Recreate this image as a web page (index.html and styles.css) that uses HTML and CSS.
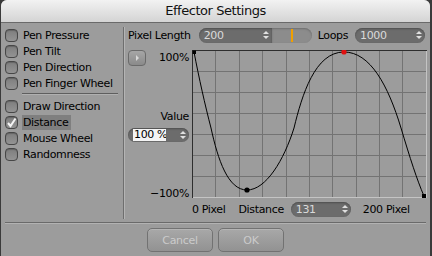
FILE: index.html
```html
<html>
  <head>
    <link rel="stylesheet" href="styles.css">
    <title>Effector Settings</title>
  </head>
  <body>
    <div class="window">
      <div class="titlebar">Effector Settings</div>

      <div class="main">
        <div class="options">
          <div class="option"><span class="box"></span><span class="label">Pen Pressure</span></div>
          <div class="option"><span class="box"></span><span class="label">Pen Tilt</span></div>
          <div class="option"><span class="box"></span><span class="label">Pen Direction</span></div>
          <div class="option"><span class="box"></span><span class="label">Pen Finger Wheel</span></div>
          <div class="rule"></div>
          <div class="option"><span class="box"></span><span class="label">Draw Direction</span></div>
          <div class="option">
            <span class="box">
              <svg width="13" height="13" viewBox="0 0 13 13"><path d="M3 7 L5.5 10 L10.5 2.5" fill="none" stroke="#f4f4f4" stroke-width="2"/></svg>
            </span>
            <span class="label active">Distance</span>
          </div>
          <div class="option"><span class="box"></span><span class="label">Mouse Wheel</span></div>
          <div class="option"><span class="box"></span><span class="label">Randomness</span></div>
        </div>

        <div class="panel">
          <div class="toprow">
            <span class="text">Pixel Length</span>
            <div class="field length">200<span class="spin"></span></div>
            <div class="slider"><span class="knob"></span></div>
            <span class="text loops">Loops</span>
            <div class="field count">1000<span class="spin"></span></div>
          </div>

          <div class="middle">
            <div class="axis">
              <div class="axis-top">
                <span class="play"></span>
                <span class="text">100%</span>
              </div>
              <div class="text value">Value</div>
              <div class="field pct"><span class="sel">100 %</span><span class="spin"></span></div>
              <div class="text minus">&minus;100%</div>
            </div>
            <svg class="graph" width="235" height="148" viewBox="0 0 235 148">
              <g stroke="#737373" stroke-width="1">
                <line x1="23.5" y1="0" x2="23.5" y2="147"/>
                <line x1="47.5" y1="0" x2="47.5" y2="147"/>
                <line x1="70.5" y1="0" x2="70.5" y2="147"/>
                <line x1="94.5" y1="0" x2="94.5" y2="147"/>
                <line x1="117.5" y1="0" x2="117.5" y2="147"/>
                <line x1="140.5" y1="0" x2="140.5" y2="147"/>
                <line x1="164.5" y1="0" x2="164.5" y2="147"/>
                <line x1="187.5" y1="0" x2="187.5" y2="147"/>
                <line x1="210.5" y1="0" x2="210.5" y2="147"/>
                <line x1="0" y1="21.5" x2="234" y2="21.5"/>
                <line x1="0" y1="42.5" x2="234" y2="42.5"/>
                <line x1="0" y1="63.5" x2="234" y2="63.5"/>
                <line x1="0" y1="84.5" x2="234" y2="84.5"/>
                <line x1="0" y1="105.5" x2="234" y2="105.5"/>
                <line x1="0" y1="126.5" x2="234" y2="126.5"/>
              </g>
              <line x1="0" y1="147.5" x2="235" y2="147.5" stroke="#c4c4c4"/>
              <line x1="234.5" y1="0" x2="234.5" y2="148" stroke="#c4c4c4"/>
              <line x1="0.5" y1="0" x2="0.5" y2="148" stroke="#2e2e2e"/>
              <line x1="0" y1="0.5" x2="235" y2="0.5" stroke="#2e2e2e"/>
              <path d="M2,2 C7,28 13,55 19,78 C26,110 36,140 55,140 C74,140 92,110 102,78 C110,45 123,2 152,2 C178,2 196,35 209,78 C218,108 225,130 232,146"
                    fill="none" stroke="#000" stroke-width="1"/>
              <rect x="0.5" y="0.5" width="3.5" height="3.5" fill="#000"/>
              <rect x="230" y="144" width="4" height="4" fill="#000"/>
              <circle cx="55" cy="140" r="2.6" fill="#000"/>
              <circle cx="152" cy="2" r="2.6" fill="#e01010"/>
            </svg>
          </div>

          <div class="bottomrow">
            <span class="text zero">0 Pixel</span>
            <span class="text dist">Distance</span>
            <div class="field distance">131<span class="spin"></span></div>
            <span class="text max">200 Pixel</span>
          </div>
        </div>
      </div>

      <div class="separator"></div>

      <div class="footer">
        <button class="btn">Cancel</button>
        <button class="btn">OK</button>
      </div>
    </div>
  </body>
</html>
```

FILE: styles.css
```css
body {
  margin: 0;
  background: #3a3a3a;
  font-family: "DejaVu Sans", Verdana, sans-serif;
  font-size: 11px;
  letter-spacing: -0.35px;
  color: #000;
}

.window {
  margin-left: 1px;
  width: 429px;
  height: 256px;
  background: #9c9c9c;
  border-radius: 6px 6px 0 0;
  overflow: hidden;
}

.titlebar {
  height: 22px;
  line-height: 22px;
  text-align: center;
  font-size: 13px;
  letter-spacing: -0.45px;
  color: #111;
  background: linear-gradient(#f2f2f2, #d4d4d4);
  border-bottom: 1px solid #6a6a6a;
}

.main {
  display: flex;
  padding-top: 4px;
  height: 192px;
}

/* left column with checkboxes */
.options {
  width: 118px;
  padding-left: 4px;
  border-right: 1px solid #6e6e6e;
  box-shadow: 1px 0 0 #b4b4b4;
}

.option {
  display: flex;
  align-items: center;
  height: 16px;
}

.box {
  width: 11px;
  height: 11px;
  border: 1px solid #474747;
  border-radius: 4px;
  background: linear-gradient(#7e7e7e, #939393);
  box-shadow: inset 0 1px 1px #656565;
  position: relative;
}

.box svg {
  position: absolute;
  left: -1px;
  top: -1px;
}

.label {
  margin-left: 4px;
  padding: 1px 1px;
  line-height: 13px;
}

.label.active {
  background: #7f7f7f;
  padding-right: 3px;
}

.rule {
  margin: 2px 0 3px 17px;
  height: 1px;
  width: 96px;
  background: #5e5e5e;
  border-bottom: 1px solid #b0b0b0;
}

/* right panel */
.panel {
  padding-left: 4px;
  flex: 1;
}

.toprow {
  display: flex;
  align-items: center;
  margin-top: 1px;
  height: 15px;
}

.field {
  position: relative;
  height: 15px;
  line-height: 15px;
  background: #6c6c6c;
  color: #dadada;
  border-radius: 8px;
  box-shadow: inset 0 1px 2px #4e4e4e;
  padding-left: 5px;
  box-sizing: border-box;
  white-space: nowrap;
}

.spin {
  position: absolute;
  right: 3px;
  top: 3px;
  width: 0;
  height: 0;
  border-left: 3px solid transparent;
  border-right: 3px solid transparent;
  border-bottom: 3px solid #e0e0e0;
}

.spin::after {
  content: "";
  position: absolute;
  left: -3px;
  top: 5px;
  border-left: 3px solid transparent;
  border-right: 3px solid transparent;
  border-top: 3px solid #e0e0e0;
}

.field.length {
  margin-left: 8px;
  width: 73px;
  border-radius: 8px 0 0 8px;
}

.slider {
  position: relative;
  width: 40px;
  height: 15px;
  background: #8c8c8c;
  border-radius: 0 8px 8px 0;
  box-shadow: inset 0 1px 2px #6e6e6e;
}

.knob {
  position: absolute;
  left: 19px;
  top: 1px;
  width: 2px;
  height: 13px;
  background: #f0a000;
}

.loops {
  margin-left: 6px;
}

.field.count {
  margin-left: 7px;
  width: 70px;
}

.middle {
  display: flex;
  margin-top: 6px;
}

.axis {
  width: 61px;
  height: 150px;
  margin-right: 3px;
}

.axis-top {
  display: flex;
  justify-content: space-between;
  align-items: center;
  height: 17px;
}

.play {
  position: relative;
  width: 18px;
  height: 16px;
  box-sizing: border-box;
  border: 1px solid #6a6a6a;
  border-radius: 4px;
  background: linear-gradient(#a6a6a6, #8a8a8a);
}

.play::after {
  content: "";
  position: absolute;
  left: 7px;
  top: 4px;
  border-top: 3px solid transparent;
  border-bottom: 3px solid transparent;
  border-left: 3px solid #d8d8d8;
}

.value {
  margin-top: 44px;
  line-height: 13px;
  text-align: right;
}

.field.pct {
  margin-top: 5px;
  height: 14px;
  line-height: 14px;
  color: #000;
}

.sel {
  display: inline-block;
  background: #f4f4f4;
  height: 12px;
  line-height: 12px;
  margin-top: 1px;
  padding: 0 1px;
  width: 31px;
  white-space: nowrap;
  overflow: hidden;
}

.minus {
  margin-top: 45px;
  line-height: 13px;
  text-align: right;
}

.graph {
  display: block;
  margin-top: 1px;
}

.bottomrow {
  display: flex;
  align-items: center;
  margin-top: 3px;
  height: 15px;
}

.zero {
  margin-left: 64px;
}

.dist {
  margin-left: 13px;
}

.field.distance {
  margin-left: 7px;
  width: 60px;
}

.max {
  margin-left: 12px;
}

.separator {
  margin: 3px 4px 0 4px;
  height: 1px;
  background: #6a6a6a;
  border-bottom: 1px solid #b2b2b2;
}

.footer {
  display: flex;
  justify-content: center;
  gap: 5px;
  margin-top: 4px;
}

.btn {
  width: 66px;
  height: 24px;
  font-family: "DejaVu Sans", Verdana, sans-serif;
  font-size: 11px;
  letter-spacing: -0.3px;
  color: #cbcbcb;
  background: linear-gradient(#a8a8a8, #929292);
  border: 1px solid #727272;
  border-radius: 5px;
  box-shadow: inset 0 1px 0 #b4b4b4;
}
```
